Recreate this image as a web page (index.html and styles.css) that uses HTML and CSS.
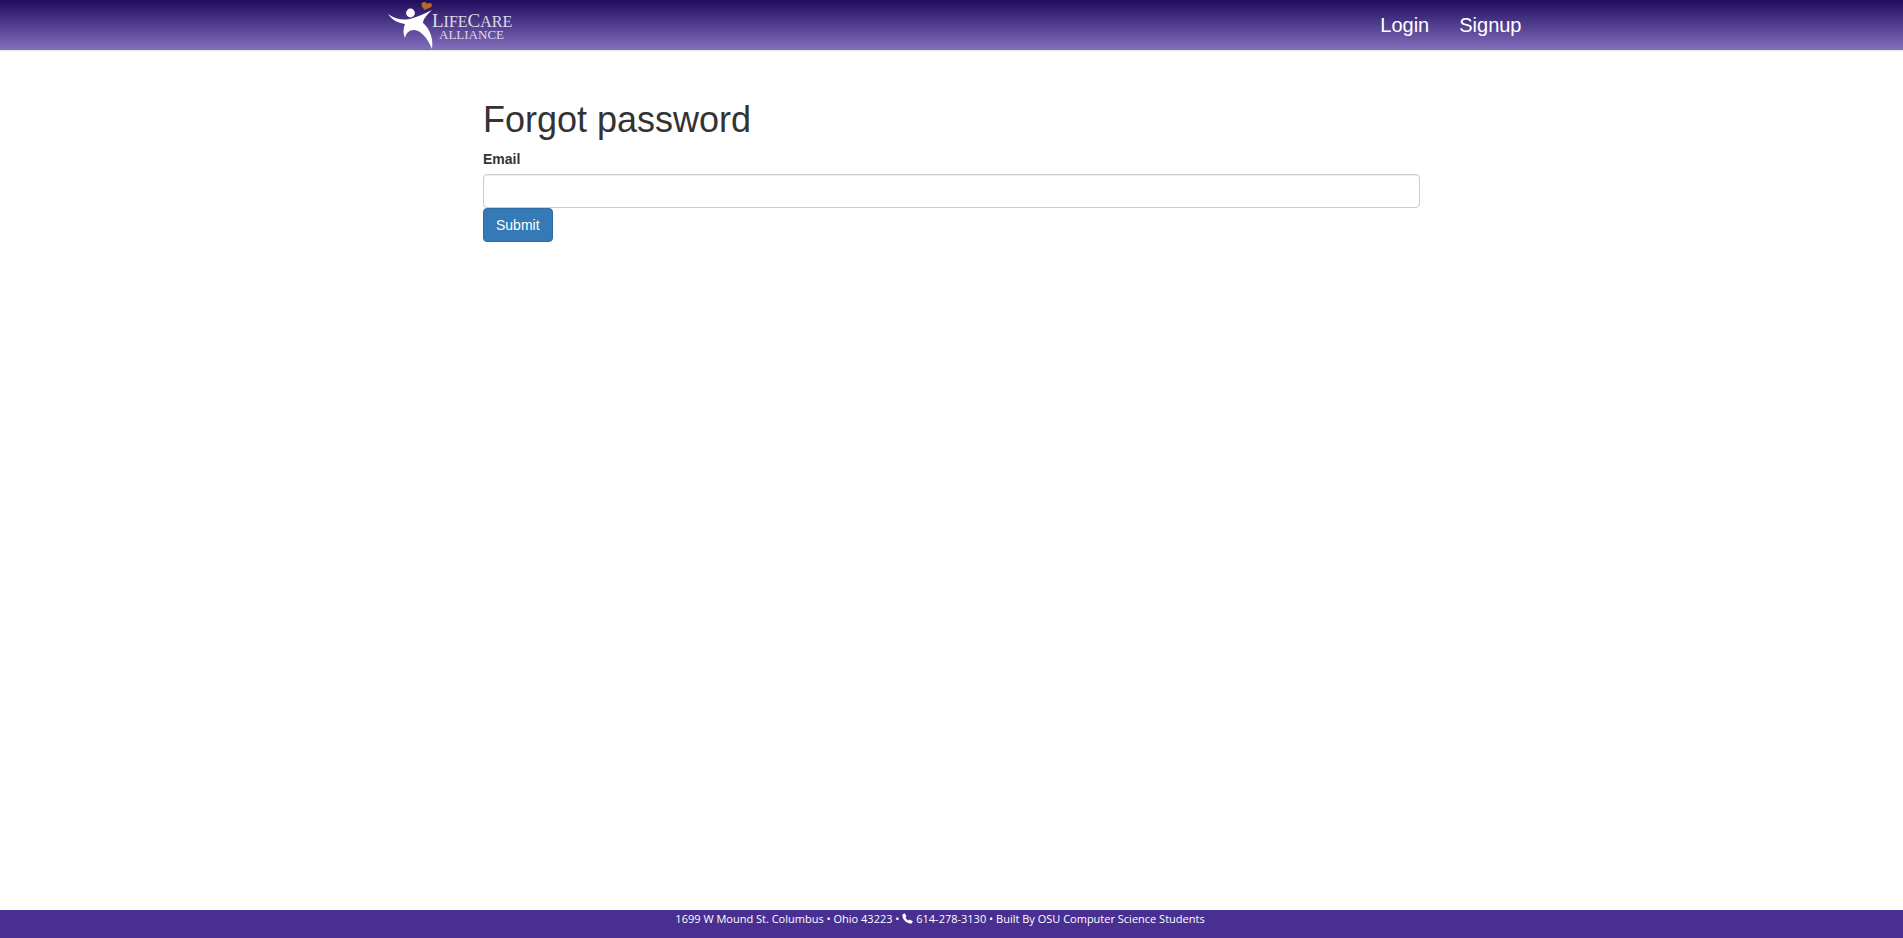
FILE: index.html
```html
<!DOCTYPE html>
<html lang="en">
<head>
<meta charset="utf-8">
<title>Forgot password</title>
<link rel="stylesheet" href="styles.css">
</head>
<body>
<header class="navbar">
  <div class="container">
    <a class="brand" href="#" aria-label="LifeCare Alliance">
      <svg class="logo" viewBox="0 0 134 50" role="img" aria-hidden="true">
        <g fill="#fff">
          <circle cx="25.500" cy="13" r="4.400"/>
          <path d="M3 14C9 18 15 20 21 19.500C27 19 35 16 47 10C42 15 38 19 38 23C43 27 49 37 47 49C43 39 36 30 29 30C24 30 21 33 20 38C18 34 18 29 20 24C13 23 7 20 3 14Z"/>
        </g>
        <path fill="#b86b20" d="M40 10C37 8 36 4 37 3C39 1 41 2 42 4C44 2 47 3 47 5C47 8 43 8 40 10Z"/>
        <g class="logo-text">
          <text x="47" y="27" font-size="19">L<tspan font-size="16">IFE</tspan><tspan font-size="19">C</tspan><tspan font-size="16">ARE</tspan></text>
          <text x="54" y="39" font-size="13">ALLIANCE</text>
        </g>
      </svg>
    </a>
    <nav class="links">
      <a href="#">Login</a>
      <a href="#">Signup</a>
    </nav>
  </div>
</header>
<main class="content">
  <h1>Forgot password</h1>
  <form>
    <label for="email">Email</label>
    <input class="field" id="email" type="email" name="email">
    <button class="submit" type="submit">Submit</button>
  </form>
</main>
<footer class="footer">
  <p>1699 W Mound St. Columbus • Ohio 43223 • <svg class="phone" viewBox="0 0 11 11" aria-hidden="true"><path fill="#fff" d="M.5 1.500L2.600 .3L4.500 3.200L3.500 4.300C4 5.700 5.200 6.900 6.600 7.500L7.700 6.500L10.700 8.300L10 10.200C6 12 -.5 6.200 .5 1.500Z"/></svg> 614-278-3130 • Built By OSU Computer Science Students</p>
</footer>
</body>
</html>
```
FILE: styles.css
```css
* {
  box-sizing: border-box;
}

body {
  display: flex;
  flex-direction: column;
  min-height: 100vh;
  margin: 0;
  background: #fff;
  color: #333;
  font: 14px/20px "Liberation Sans", Arial, sans-serif;
}

.navbar {
  background: linear-gradient(#200b5e, #836fbd);
  border-bottom: 1px solid #e7e7e7;
}

.container {
  display: flex;
  justify-content: space-between;
  width: 100%;
  max-width: 1170px;
  margin: 0 auto;
}

.brand {
  margin-left: 18px;
}

.logo {
  display: block;
  width: 134px;
  height: 50px;
}

.logo-text {
  fill: #dedbe5;
  font-family: "Liberation Serif", "Times New Roman", serif;
}

.links {
  display: flex;
}

.links a {
  padding: 15px;
  color: #fff;
  font-size: 20px;
  text-decoration: none;
}

.content {
  flex: 1;
  width: 100%;
  max-width: 937px;
  margin: 0 auto;
  padding-top: 48px;
}

h1 {
  margin: 0 0 8px;
  font-size: 36px;
  font-weight: 400;
  line-height: 42px;
}

label {
  display: block;
  margin-bottom: 5px;
  font-weight: 700;
}

.field {
  display: block;
  width: 100%;
  height: 34px;
  padding: 6px 12px;
  border: 1px solid #ccc;
  border-radius: 4px;
  box-shadow: inset 0 1px 1px rgba(0, 0, 0, 0.075);
  font: inherit;
}

.submit {
  display: block;
  padding: 6px 12px;
  border: 1px solid #2e6da4;
  border-radius: 4px;
  background: #337ab7;
  color: #fff;
  font: inherit;
}

.footer {
  height: 28px;
  padding-right: 23px;
  background: #4a2f92;
  color: #fff;
  font: 11px/18px "Open Sans", "Noto Sans", sans-serif;
  text-align: center;
}

.footer p {
  margin: 0;
}

.phone {
  width: 11px;
  height: 11px;
  vertical-align: -1px;
}
```
